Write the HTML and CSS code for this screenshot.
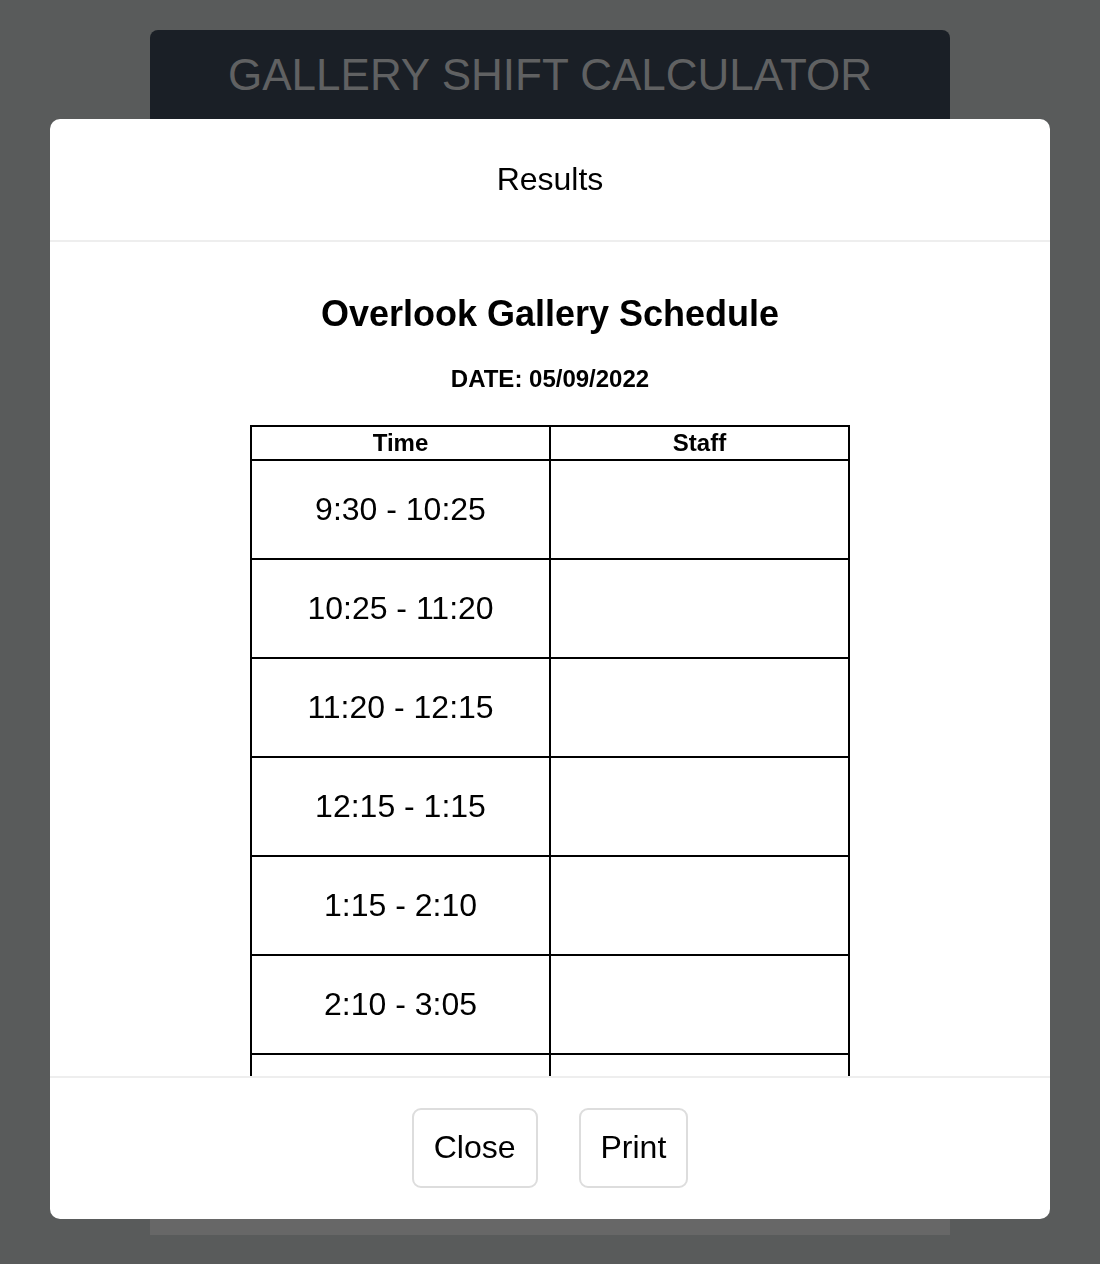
FILE: index.html
```html
<!DOCTYPE html>
<html lang="en">
<head>
<meta charset="utf-8">
<title>Gallery Shift Calculator</title>
<link rel="stylesheet" href="styles.css">
</head>
<body>
<div class="page">
  <header class="app-header">
    <h1 class="app-title">GALLERY SHIFT CALCULATOR</h1>
  </header>
  <main class="app-card"></main>
</div>

<div class="backdrop">
  <div class="modal" role="dialog" aria-labelledby="modal-title">
    <div class="modal-header">
      <h3 id="modal-title" class="modal-title">Results</h3>
    </div>
    <div class="modal-body">
      <h2 class="schedule-title">Overlook Gallery Schedule</h2>
      <p class="schedule-date">DATE: 05/09/2022</p>
      <table class="schedule">
        <thead>
          <tr><th>Time</th><th>Staff</th></tr>
        </thead>
        <tbody>
          <tr><td>9:30 - 10:25</td><td></td></tr>
          <tr><td>10:25 - 11:20</td><td></td></tr>
          <tr><td>11:20 - 12:15</td><td></td></tr>
          <tr><td>12:15 - 1:15</td><td></td></tr>
          <tr><td>1:15 - 2:10</td><td></td></tr>
          <tr><td>2:10 - 3:05</td><td></td></tr>
          <tr><td>3:05 - 4:00</td><td></td></tr>
          <tr><td>4:00 - 5:00</td><td></td></tr>
        </tbody>
      </table>
    </div>
    <div class="modal-footer">
      <button class="btn" type="button">Close</button>
      <button class="btn" type="button">Print</button>
    </div>
  </div>
</div>
</body>
</html>
```

FILE: styles.css
```css
html, body {
  margin: 0;
  padding: 0;
}

body {
  background: #595b5b;
  font-family: "Liberation Sans", Arial, Helvetica, sans-serif;
  color: #000;
  height: 1264px;
  overflow: hidden;
}

.page {
  width: 800px;
  margin: 30px auto 0;
  display: flex;
  flex-direction: column;
}

.app-header {
  height: 90px;
  background: #1a1f26;
  border-radius: 8px 8px 0 0;
  display: flex;
  align-items: center;
  justify-content: center;
}

.app-title {
  margin: 0;
  font-size: 44px;
  font-weight: normal;
  color: #606162;
}

.app-card {
  height: 1115px;
  background: #676767;
}

.backdrop {
  position: fixed;
  inset: 0;
}

.modal {
  position: absolute;
  top: 119px;
  left: 50px;
  width: 1000px;
  height: 1100px;
  background: #fff;
  border-radius: 10px;
  display: flex;
  flex-direction: column;
  overflow: hidden;
}

.modal-header {
  height: 121px;
  flex: none;
  border-bottom: 2px solid #eeeeee;
  display: flex;
  align-items: center;
  justify-content: center;
}

.modal-title {
  margin: 0;
  font-size: 32px;
  font-weight: normal;
}

.modal-body {
  flex: 1;
  overflow: hidden;
  padding-top: 50px;
  display: flex;
  flex-direction: column;
  align-items: center;
}

.schedule-title {
  margin: 0;
  font-size: 36px;
  line-height: 43px;
  font-weight: bold;
}

.schedule-date {
  margin: 30px 0 0;
  font-size: 24px;
  line-height: 28px;
  font-weight: bold;
}

.schedule {
  margin-top: 32px;
  width: 600px;
  table-layout: fixed;
  border-collapse: collapse;
  flex: none;
}

.schedule th,
.schedule td {
  border: 2px solid #000;
  padding: 0;
  text-align: center;
  width: 50%;
}

.schedule th {
  font-size: 24px;
  line-height: 32px;
  font-weight: bold;
}

.schedule td {
  font-size: 32px;
  line-height: 97px;
}

.modal-footer {
  flex: none;
  height: 143px;
  border-top: 2px solid #eeeeee;
  display: flex;
  align-items: center;
  justify-content: center;
  gap: 41px;
  box-sizing: border-box;
  padding-bottom: 2px;
}

.btn {
  height: 80px;
  padding: 0 20px;
  border: 2px solid #dddddd;
  border-radius: 9px;
  background: #fff;
  font-family: inherit;
  font-size: 32px;
  color: #000;
}
```
